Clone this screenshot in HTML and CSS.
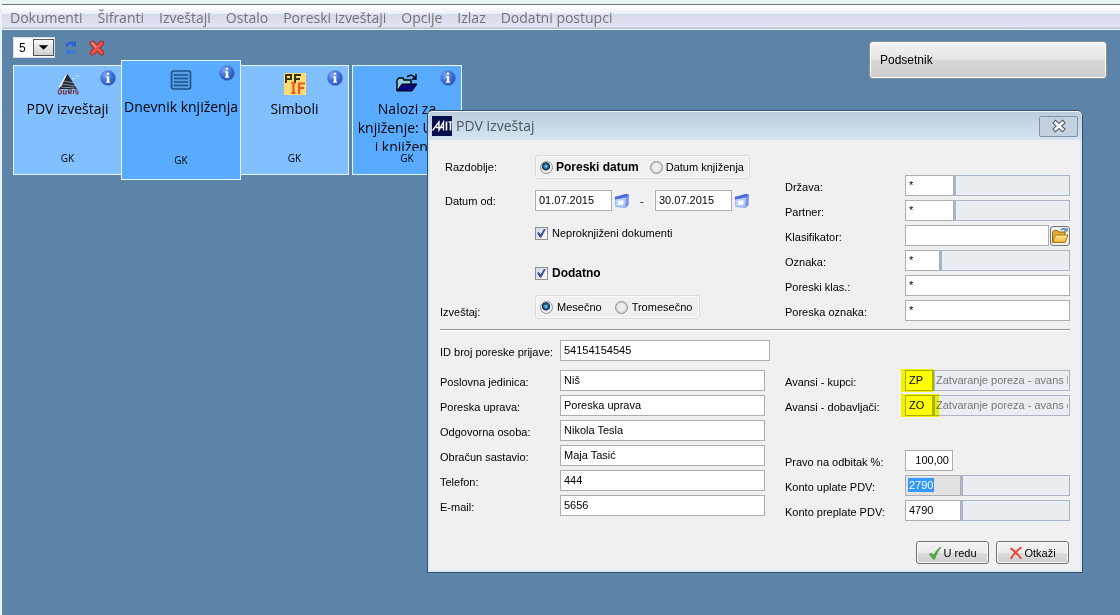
FILE: index.html
```html
<!DOCTYPE html>
<html lang="sr-Latn">
<head>
<meta charset="utf-8">
<title>PDV izveštaj</title>
<link rel="stylesheet" href="styles.css">
</head>
<body>
<svg class="defs" aria-hidden="true">
  <defs>
    <radialGradient id="infoFill" cx="35%" cy="30%" r="75%"><stop offset="0" stop-color="#7fa8f2"/><stop offset="0.6" stop-color="#3a6ad6"/><stop offset="1" stop-color="#254fae"/></radialGradient>
    <linearGradient id="folderFill" x1="0" y1="0" x2="0" y2="1"><stop offset="0" stop-color="#ffe9a0"/><stop offset="1" stop-color="#eeb52c"/></linearGradient>
    <linearGradient id="calFill" x1="0" y1="0" x2="1" y2="1"><stop offset="0" stop-color="#c9dcff"/><stop offset="1" stop-color="#9fc0fb"/></linearGradient>
    <symbol id="info" viewBox="0 0 16 16"><circle cx="8" cy="8" r="7.6" fill="url(#infoFill)" stroke="#5b86dc" stroke-width=".6"/><path d="M6.9 2.8h2.3v2H6.9zM6 6.2h3.2v5.3h1v1.2H5.9v-1.2h1V7.4H6z" fill="#fff"/></symbol>
    <symbol id="calendar" viewBox="0 0 16 16"><path d="M.8 4 12.500.8 15 2 14.500 12.500 11.500 15 1.500 14z" fill="#88a4ea"/><path d="M1.300 6.500 11.800 4.500 11.300 14.200 2 13.300z" fill="url(#calFill)"/><path d="M.8 4 12.500.8 15 2 12.200 4.300 1 6.600z" fill="#4f69d6"/><path d="m12.300 4.800 2.400-2.200-.5 9.700-2.400 2z" fill="#7d92e4"/><path d="m4 8.300 5.500-1-.2 4.500-5 .2z" fill="#fff"/></symbol>
  </defs>
</svg>
<div class="app">
  <nav class="menu" aria-label="Glavni meni">
    <a href="#">Dokumenti</a><a href="#">Šifranti</a><a href="#">Izveštaji</a><a href="#">Ostalo</a><a href="#">Poreski izveštaji</a><a href="#">Opcije</a><a href="#">Izlaz</a><a href="#">Dodatni postupci</a>
  </nav>
  <main class="workspace">
    <div class="panel">
      <div class="toolbar">
        <span class="count">
          <select aria-label="Broj pločica"><option>5</option></select>
          <svg class="count-arrow" viewBox="0 0 20 16" aria-hidden="true"><path d="M5 5.500h10L10 10.500z" fill="#000"/></svg>
        </span>
        <button class="tool" aria-label="Osveži"><svg viewBox="0 0 16 16"><path d="M3.500 6.500C4 3 7 2 10.500 3.300" fill="none" stroke="#2360d4" stroke-width="2.400"/><path d="M12.800.8 13.200 7 8 5.500z" fill="#2360d4"/><path d="M12 10.500C10.500 13.200 8 13.600 5.500 12.700" fill="none" stroke="#3a78de" stroke-width="2.400"/><path d="M3.200 15.200 2.800 9 8 10.500z" fill="#3a78de"/></svg></button>
        <button class="tool" aria-label="Obriši"><svg viewBox="0 0 16 16"><path d="M3.500 3.300 12.500 12.700M12.500 3.300 3.500 12.700" stroke="#a02a2a" stroke-width="5.400" stroke-linecap="round"/><path d="M3.500 3.300 12.500 12.700M12.500 3.300 3.500 12.700" stroke="#e8504c" stroke-width="3.600" stroke-linecap="round"/><path d="M3 3 7 7" stroke="#ff9c95" stroke-width="1.500" stroke-linecap="round"/></svg></button>
      </div>
      <div class="tiles">
        <article class="tile joined-left">
          <svg class="tile-info"><use href="#info"/></svg>
          <svg class="tile-icon" viewBox="0 0 22 22"><path d="M10.500 1 20 16H2z" fill="#23262d"/><path d="M9 2 2 14l2-1zM19 3l2 0M15 6l3-1" fill="#d8d8d8" stroke="#e8f2ff"/><path d="M7 8l9 2M5 11l13 2M4 14l14 1" stroke="#8793a0" stroke-width="1"/><path d="M1.500 17v4h2l1-1v-2l-1-1zM6.500 17v4h2.500v-4M11.500 21v-4h3v2h-3l3 2M16.500 17v4M21 17h-2.500v2H21v2h-2.500" fill="none" stroke="#70414a" stroke-width="1.200"/></svg>
          <h2>PDV izveštaji</h2><p>GK</p>
        </article>
        <article class="tile active">
          <svg class="tile-info"><use href="#info"/></svg>
          <svg class="tile-icon" viewBox="0 0 22 22"><rect x="1.500" y="2" width="19" height="18" rx="2" fill="#559fe6" stroke="#1f5288" stroke-width="1.600"/><path d="M4 6h14M4 9.500h14M4 13h14M4 16.500h14" stroke="#1f5288" stroke-width="1.500"/></svg>
          <h2>Dnevnik knjiženja</h2><p>GK</p>
        </article>
        <article class="tile joined-right">
          <svg class="tile-info"><use href="#info"/></svg>
          <svg class="tile-icon" viewBox="0 0 22 22"><path d="M0 0h22v22H0z" fill="#ffdc73"/><path d="M2 10V2h5v4H2M11 10V2h6M11 6h5" fill="none" stroke="#3b3512" stroke-width="2"/><path d="M7.500 10h4M9.500 10v10M7.500 20h4M15 21V10.500h6M15 15h5" fill="none" stroke="#f0561d" stroke-width="2.200"/></svg>
          <h2>Simboli</h2><p>GK</p>
        </article>
        <article class="tile strong">
          <svg class="tile-info"><use href="#info"/></svg>
          <svg class="tile-icon" viewBox="0 0 22 22"><path d="M1 18V7l2-2h4l1 2h7v4" fill="#8fd0dc" stroke="#000" stroke-width="1.400"/><path d="M1 18 6 11h15l-5 7z" fill="#06087c" stroke="#000"/><path d="M11 4c3-3 6-2 8 1M20 1v5h-4" fill="none" stroke="#000" stroke-width="1.400"/></svg>
          <h2>Nalozi za<br>knjiženje: Unos<br>i knjiženje</h2><p>GK</p>
        </article>
      </div>
    </div>
    <button class="reminder">Podsetnik</button>
  </main>

  <form class="dialog" role="dialog" aria-labelledby="dialog-title">
    <header class="titlebar">
      <svg class="logo" viewBox="0 0 20 20" aria-hidden="true"><path d="M0 0h20v20H0z" fill="#07104d"/><path d="M.5 14.500 7 6v8L11.500 6v8.500M4 11.500h7.500" fill="none" stroke="#fff" stroke-width="1.300"/><path d="M14.500 5.500v9M18.500 5.500v9" stroke="#fff" stroke-width="1.600"/><path d="M16.500 6H20" stroke="#fff" stroke-width="1.200"/></svg>
      <h1 id="dialog-title">PDV izveštaj</h1>
      <button type="button" class="close" aria-label="Zatvori"><svg viewBox="0 0 16 14"><path d="m4.500 3.800 7 6.400M11.500 3.800l-7 6.400" stroke="#4d5564" stroke-width="4.600" stroke-linecap="square"/><path d="m4.500 3.800 7 6.400M11.500 3.800l-7 6.400" stroke="#fff" stroke-width="2.600" stroke-linecap="square"/></svg></button>
    </header>

    <section class="upper">
      <div class="period">
        <div class="line range">
          <span class="caption inset" id="l-razdoblje">Razdoblje:</span>
          <div class="group" role="radiogroup" aria-labelledby="l-razdoblje">
            <label class="choice"><input type="radio" name="razdoblje" checked><b>Poreski datum</b></label>
            <label class="choice"><input type="radio" name="razdoblje">Datum knjiženja</label>
          </div>
        </div>
        <div class="line dates">
          <label class="caption inset" for="od">Datum od:</label>
          <input class="date" id="od" value="01.07.2015">
          <button type="button" class="pick" aria-label="Izaberi datum od"><svg><use href="#calendar"/></svg></button>
          <span class="dash">-</span>
          <input class="date" aria-label="Datum do" value="30.07.2015">
          <button type="button" class="pick" aria-label="Izaberi datum do"><svg><use href="#calendar"/></svg></button>
        </div>
        <label class="choice check"><input type="checkbox" checked>Neproknjiženi dokumenti</label>
        <label class="choice check extra"><input type="checkbox" checked><b>Dodatno</b></label>
        <div class="line kind">
          <span class="caption low" id="l-izvestaj">Izveštaj:</span>
          <div class="group" role="radiogroup" aria-labelledby="l-izvestaj">
            <label class="choice"><input type="radio" name="izvestaj" checked>Mesečno</label>
            <label class="choice"><input type="radio" name="izvestaj">Tromesečno</label>
          </div>
        </div>
      </div>
      <div class="fields side filters">
        <div class="row"><label for="drzava">Država:</label><input class="code" id="drzava" value="*"><input class="desc" aria-label="Naziv države" readonly></div>
        <div class="row"><label for="partner">Partner:</label><input class="code" id="partner" value="*"><input class="desc" aria-label="Naziv partnera" readonly></div>
        <div class="row"><label for="klasifikator">Klasifikator:</label><input class="wide" id="klasifikator"><button type="button" class="browse" aria-label="Otvori"><svg viewBox="0 0 18 18"><path d="M1.500 15V5l1.500-1.500h3.500L8 5h6v3" fill="#e4ab32" stroke="#9a6c17"/><path d="M1.500 15.500 4.500 8H17l-3 7.500z" fill="url(#folderFill)" stroke="#a87818"/><path d="M10 3c2-2 4-1 5 0M16 1v3h-3" fill="none" stroke="#4a7fa5" stroke-width="1.200"/></svg></button></div>
        <div class="row"><label for="oznaka">Oznaka:</label><input class="code short" id="oznaka" value="*"><input class="desc" aria-label="Naziv oznake" readonly></div>
        <div class="row"><label for="klas">Poreski klas.:</label><input class="wide" id="klas" value="*"></div>
        <div class="row"><label for="poznaka">Poreska oznaka:</label><input class="wide" id="poznaka" value="*"></div>
      </div>
    </section>

    <section class="lower">
      <div class="fields company">
        <div class="row first"><label for="idbroj">ID broj poreske prijave:</label><input class="wide" id="idbroj" value="54154154545"></div>
        <div class="row"><label for="pj">Poslovna jedinica:</label><input class="wide" id="pj" value="Niš"></div>
        <div class="row"><label for="pu">Poreska uprava:</label><input class="wide" id="pu" value="Poreska uprava"></div>
        <div class="row"><label for="oo">Odgovorna osoba:</label><input class="wide" id="oo" value="Nikola Tesla"></div>
        <div class="row"><label for="os">Obračun sastavio:</label><input class="wide" id="os" value="Maja Tasić"></div>
        <div class="row"><label for="tel">Telefon:</label><input class="wide" id="tel" value="444"></div>
        <div class="row"><label for="mail">E-mail:</label><input class="wide" id="mail" value="5656"></div>
      </div>
      <div class="fields side accounts">
        <div class="row marked"><label for="kupci">Avansi - kupci:</label><input class="code mini" id="kupci" value="ZP"><input class="desc" aria-label="Opis avansa kupci" readonly value="Zatvaranje poreza - avans kupci"></div>
        <div class="row marked more"><label for="dob">Avansi - dobavljači:</label><input class="code mini" id="dob" value="ZO"><input class="desc" aria-label="Opis avansa dobavljači" readonly value="Zatvaranje poreza - avans dobavljači"></div>
        <div class="row apart"><label for="pravo">Pravo na odbitak %:</label><input class="code amount" id="pravo" value="100,00"></div>
        <div class="row"><label for="uplata">Konto uplate PDV:</label><input class="code account selected" id="uplata" value="2790"><input class="desc" aria-label="Naziv konta uplate" readonly></div>
        <div class="row"><label for="preplata">Konto preplate PDV:</label><input class="code account" id="preplata" value="4790"><input class="desc" aria-label="Naziv konta preplate" readonly></div>
      </div>
    </section>

    <footer class="actions">
      <button type="button"><svg viewBox="0 0 16 16"><path d="M1.500 9.500 4 8l2.500 3C8 7 11 3.500 15 1c-3 4-5.500 8-7.500 14H6z" fill="#4fb04a" stroke="#35863a" stroke-width=".7"/></svg>U redu</button>
      <button type="button"><svg viewBox="0 0 16 16"><path d="M2.500 3C7 6 10 9.500 13.500 14M13.500 2C9 5.500 5 9 2.500 14" fill="none" stroke="#e8452f" stroke-width="2.200" stroke-linecap="round"/></svg>Otkaži</button>
    </footer>
  </form>
</div>
</body>
</html>
```
FILE: styles.css
```css
* { box-sizing: border-box; }

body {
  margin: 0;
  min-height: 100vh;
  background: #e8f3f5;
  color: #000;
  font: 11px/14px "Liberation Sans", Arial, sans-serif;
}

h1, h2, p { margin: 0; font-weight: normal; }
button, input, select { font: inherit; color: inherit; margin: 0; }
button { padding: 0; }
svg { display: block; }
.defs { position: absolute; width: 0; height: 0; }

.app {
  display: flex;
  flex-direction: column;
  min-height: 100vh;
  padding: 4px 0 0 2px;
}

.menu {
  display: flex;
  gap: 15px;
  height: 26px;
  padding-left: 8px;
  border-top: 1px solid #6d7480;
  border-bottom: 1px solid #f4f6fb;
  background: linear-gradient(#fff 0, #f0f1f9 35%, #d5daea 38%, #e1e4f1 90%, #aab6cf 100%);
}

.menu a {
  color: #737477;
  font: 14px/25px "Open Sans", "Noto Sans", sans-serif;
  text-decoration: none;
  white-space: nowrap;
}

.workspace {
  flex: 1;
  display: flex;
  justify-content: space-between;
  align-items: flex-start;
  padding: 7px 14px 0 11px;
  background: #5c83a8;
}

.toolbar { display: flex; align-items: center; height: 21px; }

.count { position: relative; width: 42px; height: 21px; margin-right: 8px; }

.count select {
  width: 100%;
  height: 100%;
  padding: 0 0 0 5px;
  border: 1px solid #d7dde3;
  border-radius: 0;
  background: #fff;
  appearance: none;
  font-size: 12px;
}

.count-arrow {
  position: absolute;
  top: 2px;
  right: 1px;
  width: 21px;
  height: 17px;
  border: 1px solid #555;
  background: linear-gradient(#f8f8f8, #cfcfcf);
  pointer-events: none;
}

.tool { width: 16px; height: 16px; margin-right: 10px; border: 0; background: none; }

.tiles { display: flex; align-items: center; margin-top: 2px; }

.tile {
  position: relative;
  width: 110px;
  height: 110px;
  padding: 7px 0 9px;
  display: flex;
  flex-direction: column;
  align-items: center;
  border: 1px solid #e9f5ff;
  background: #82bfff;
  font-family: "Open Sans", "Noto Sans", sans-serif;
  text-align: center;
}

.tile.joined-left { width: 108px; border-right: 0; }
.tile.joined-right { width: 108px; border-left: 0; margin-right: 3px; }
.tile.active { width: 120px; height: 120px; padding: 8px 0 12px; }
.tile.active, .tile.strong { background: #59abff; }

.tile-icon { flex: none; width: 22px; height: 22px; }
.tile-info { position: absolute; top: 4px; right: 5px; width: 16px; height: 16px; }

.tile h2 {
  flex: 1;
  overflow: hidden;
  margin-top: 4px;
  font-size: 14px;
  line-height: 19px;
  white-space: nowrap;
}

.tile.active h2 { margin-top: 6px; }

.tile p { font-size: 10px; line-height: 14px; }

.reminder {
  width: 236px;
  height: 36px;
  margin-top: 5px;
  padding-left: 9px;
  border: 1px solid #fff;
  border-radius: 2px;
  outline: 1px solid #8a8f94;
  background: linear-gradient(#f3f3f3 0, #e4e4e4 48%, #d6d6d6 52%, #cdcdcd 100%);
  font-size: 12px;
  text-align: left;
}

.dialog {
  position: absolute;
  left: 427px;
  top: 110px;
  width: 656px;
  padding: 0 12px 8px;
  border: 1px solid #35506e;
  border-radius: 6px 6px 0 0;
  background: #f0f0f0;
  box-shadow: inset 2px 0 #dbe8f5, inset -2px 0 #dbe8f5, inset 0 -2px #dbe8f5;
}

.titlebar {
  display: flex;
  align-items: center;
  height: 29px;
  margin: 0 -12px;
  padding: 0 4px;
  border-top: 1px solid #eef4fa;
  border-radius: 5px 5px 0 0;
  background: linear-gradient(#bccddd, #d6e4f2);
}

.logo { width: 20px; height: 20px; }

.titlebar h1 {
  flex: 1;
  margin-left: 4px;
  color: #4d565f;
  font: 14px/20px "Open Sans", "Noto Sans", sans-serif;
}

.close {
  display: grid;
  place-items: center;
  width: 39px;
  height: 21px;
  border: 1px solid #8093ae;
  border-radius: 2px;
  background: #c3d1e0;
}

.close svg { width: 16px; height: 14px; }

.upper, .lower { display: flex; justify-content: space-between; }
.upper { height: 190px; padding-top: 15px; border-bottom: 1px solid #999; box-shadow: 0 1px #fff; }

.period { display: flex; flex-direction: column; align-items: flex-start; }
.line { display: flex; align-items: center; }
.line.range { margin-bottom: 11px; }
.line.dates { margin-bottom: 12px; }
.caption { width: 95px; }
.caption.inset { padding-left: 5px; }
.caption.low { padding-top: 9px; }

.group {
  display: flex;
  align-items: center;
  gap: 13px;
  height: 24px;
  padding: 0 7px 0 4px;
  border: 1px solid #dcdcdc;
  border-radius: 3px;
  box-shadow: inset 0 0 0 1px #fafafa;
}

.range .group { gap: 11px; padding-right: 5px; }

.choice { display: flex; align-items: center; gap: 4px; white-space: nowrap; }
.range .choice { gap: 3px; }
.choice b { font-size: 12px; }
.check { height: 20px; margin-left: 95px; }
.check.extra { margin-top: 20px; }
.line.kind { margin-top: 12px; }

.choice input { appearance: none; width: 13px; height: 13px; border: 1px solid #8e8f8f; }

.choice input[type="radio"] {
  border-radius: 50%;
  background: radial-gradient(circle, #eee 40%, #d2d2d2 70%);
}

.choice input[type="radio"]:checked {
  background: radial-gradient(circle at 45% 40%, #a9e0f5 0, #2c7ba4 20%, #10304a 42%, #e8eef2 50%);
}

.choice input[type="checkbox"] {
  display: grid;
  place-items: center;
  background: linear-gradient(135deg, #cfd6e2, #fff);
}

.choice input[type="checkbox"]:checked::after {
  content: "";
  width: 9px;
  height: 9px;
  background: #41539a;
  clip-path: polygon(0 50%, 20% 40%, 40% 65%, 80% 0, 100% 0, 50% 100%, 30% 100%);
}

.date { width: 77px; }
.pick { width: 16px; height: 16px; margin-left: 2px; border: 0; background: none; }
.pick svg, .tool svg { width: 16px; height: 16px; }
.dash { width: 25px; padding-left: 10px; }

.date, .row input {
  height: 21px;
  padding: 0 3px 2px;
  border: 1px solid #abadb3;
  border-radius: 0;
  background: #fff;
  outline: 0;
}

.fields { display: flex; flex-direction: column; gap: 4px; }
.side { width: 285px; }
.filters { padding-top: 20px; }
.accounts { padding-top: 30px; }
.company { width: 330px; }

.row { position: relative; display: flex; align-items: center; height: 21px; padding: 0; }
.row label { flex: none; width: 120px; padding-top: 3px; white-space: nowrap; }
.row .wide, .row .desc { flex: 1; min-width: 0; }
.row .code { width: 49px; }
.row .code.short { width: 35px; }
.row .code.mini { width: 28px; }
.row .code.account { width: 56px; }
.row .code.amount { width: 48px; text-align: right; }

.row .desc {
  padding: 0 1px 2px;
  border-color: #a9b6c7;
  border-left-width: 2px;
  background: #eaeef3;
  color: #75787c;
}

.row .code.selected {
  background: linear-gradient(#3399ff, #3399ff) 2px 2px / 26px 14px no-repeat, #e2e2e2;
  color: #fff;
}

.company .row { margin-right: 5px; }
.company .first { margin: 0 0 5px; }
.row.apart { margin-top: 30px; }

.marked::after {
  content: "";
  position: absolute;
  left: 116px;
  top: -1px;
  width: 33px;
  height: 23px;
  background: #ffff00;
  mix-blend-mode: multiply;
  pointer-events: none;
}

.marked.more::after { width: 38px; }

.browse {
  width: 20px;
  height: 20px;
  margin-left: 1px;
  border: 1px solid #777;
  border-radius: 3px;
  background: #eee;
}

.browse svg { width: 18px; height: 18px; }

.lower { padding-top: 10px; }

.actions { display: flex; justify-content: flex-end; gap: 7px; margin: 20px 1px 0 0; }

.actions button {
  display: flex;
  align-items: center;
  justify-content: center;
  gap: 1px;
  width: 73px;
  height: 23px;
  border: 1px solid #707070;
  border-radius: 3px;
  background: linear-gradient(#f2f2f2 0, #ebebeb 50%, #dddddd 51%, #cfcfcf 100%);
  box-shadow: inset 0 0 0 1px #fafafa;
}

.actions svg { width: 14px; height: 14px; }
```
